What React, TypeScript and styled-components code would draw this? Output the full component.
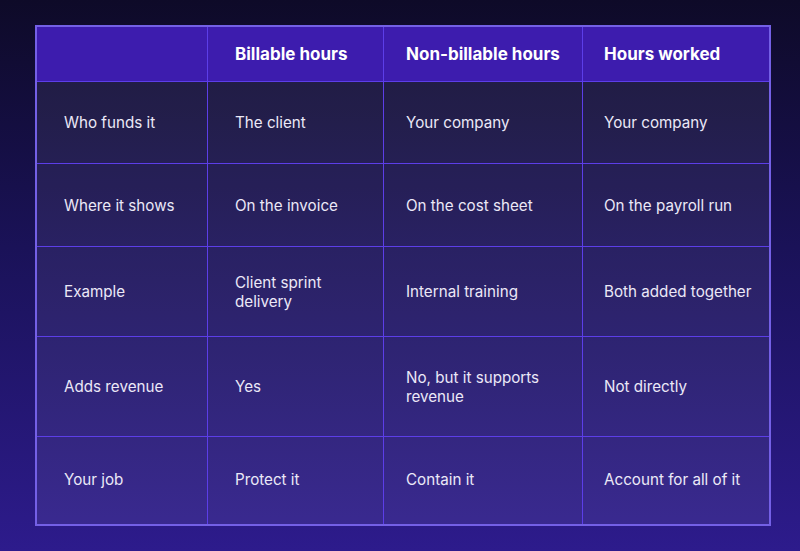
import React from "react";
import styled, { createGlobalStyle } from "styled-components";

const GlobalStyle = createGlobalStyle`
  html, body {
    margin: 0;
    padding: 0;
  }
  body {
    width: 800px;
    height: 551px;
    overflow: hidden;
    background: linear-gradient(180deg, #0e0a28 0%, #1a1258 45%, #2d1b8c 100%);
    font-family: Inter, "Noto Sans", sans-serif;
  }
`;

const Page = styled.div`
  width: 800px;
  height: 551px;
  box-sizing: border-box;
  padding: 25px 0 0 35px;
`;

const Table = styled.div`
  width: 736px;
  box-sizing: border-box;
  border: 2px solid #7460e6;
  display: grid;
  grid-template-columns: 171px 176px 199px 186px;
  grid-template-rows: 55px 82px 83px 90px 100px 87px;
`;

const Cell = styled.div<{ $pad: number; $last: boolean; $bottom: boolean; $head: boolean }>`
  box-sizing: border-box;
  display: flex;
  align-items: center;
  padding: ${(p) => (p.$bottom ? "0 10px 3px" : p.$head ? "1px 10px 0" : "0 10px")};
  padding-left: ${(p) => p.$pad}px;
  border-right: ${(p) => (p.$last ? "none" : "1px solid #5c3ee8")};
  border-bottom: ${(p) => (p.$bottom ? "none" : "1px solid #5c3ee8")};
  background: ${(p) => (p.$head ? "#3d1cae" : "rgba(255, 255, 255, 0.065)")};
  color: ${(p) => (p.$head ? "#ffffff" : "#ebe8f7")};
  font-size: ${(p) => (p.$head ? "17px" : "15.2px")};
  font-weight: ${(p) => (p.$head ? 700 : 400)};
  line-height: 19px;
`;

const pads = [27, 27, 22, 21];

const rows: string[][] = [
  ["", "Billable hours", "Non-billable hours", "Hours worked"],
  ["Who funds it", "The client", "Your company", "Your company"],
  ["Where it shows", "On the invoice", "On the cost sheet", "On the payroll run"],
  ["Example", "Client sprint delivery", "Internal training", "Both added together"],
  ["Adds revenue", "Yes", "No, but it supports revenue", "Not directly"],
  ["Your job", "Protect it", "Contain it", "Account for all of it"],
];

export default function App() {
  return (
    <>
      <GlobalStyle />
      <Page>
        <Table>
          {rows.map((row, r) =>
            row.map((text, c) => (
              <Cell
                key={`${r}-${c}`}
                $pad={pads[c]}
                $last={c === row.length - 1}
                $bottom={r === rows.length - 1}
                $head={r === 0}
              >
                {text}
              </Cell>
            ))
          )}
        </Table>
      </Page>
    </>
  );
}
